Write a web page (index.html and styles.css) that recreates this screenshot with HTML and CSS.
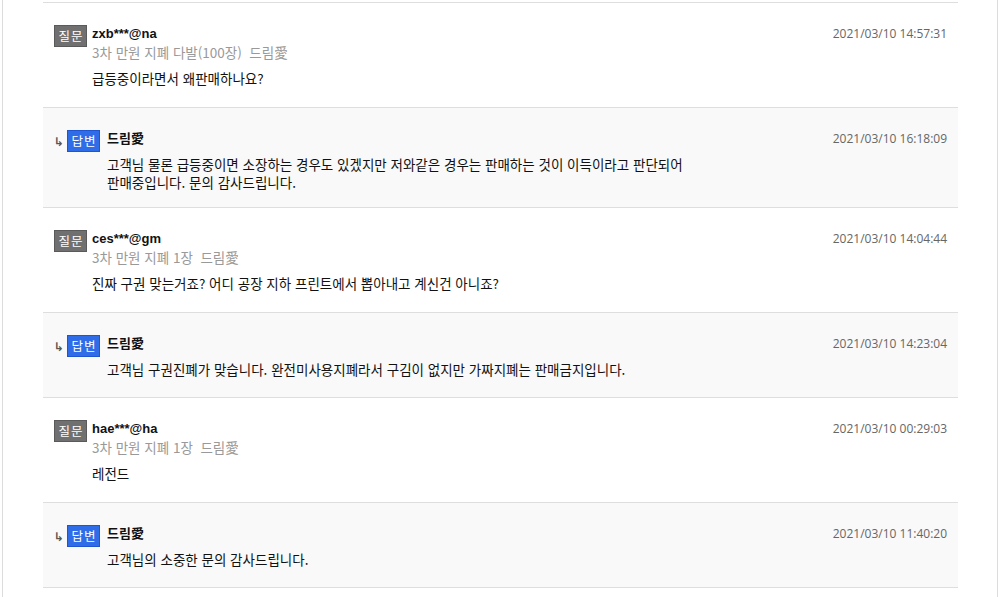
FILE: index.html
```html
<!DOCTYPE html>
<html lang="ko">
<head>
<meta charset="utf-8">
<title>상품 문의</title>
<link rel="stylesheet" href="styles.css">
</head>
<body>
<div class="frame">
  <ul class="qna">
    <li class="item q">
      <div class="head">
        <span class="badge q-badge">질문</span>
        <div class="body">
          <div class="name">zxb***@na</div>
          <div class="subject">3차 만원 지폐 다발(100장)&nbsp;&nbsp;드림愛</div>
          <div class="text">급등중이라면서 왜판매하나요?</div>
        </div>
        <span class="date">2021/03/10 14:57:31</span>
      </div>
    </li>
    <li class="item a">
      <div class="head">
        <span class="arrow">↳</span>
        <span class="badge a-badge">답변</span>
        <div class="body">
          <div class="name">드림愛</div>
          <div class="text">고객님 물론 급등중이면 소장하는 경우도 있겠지만 저와같은 경우는 판매하는 것이 이득이라고 판단되어<br>판매중입니다. 문의 감사드립니다.</div>
        </div>
        <span class="date">2021/03/10 16:18:09</span>
      </div>
    </li>
    <li class="item q">
      <div class="head">
        <span class="badge q-badge">질문</span>
        <div class="body">
          <div class="name">ces***@gm</div>
          <div class="subject">3차 만원 지폐 1장&nbsp;&nbsp;드림愛</div>
          <div class="text">진짜 구권 맞는거죠? 어디 공장 지하 프린트에서 뽑아내고 계신건 아니죠?</div>
        </div>
        <span class="date">2021/03/10 14:04:44</span>
      </div>
    </li>
    <li class="item a">
      <div class="head">
        <span class="arrow">↳</span>
        <span class="badge a-badge">답변</span>
        <div class="body">
          <div class="name">드림愛</div>
          <div class="text">고객님 구권진폐가 맞습니다. 완전미사용지폐라서 구김이 없지만 가짜지폐는 판매금지입니다.</div>
        </div>
        <span class="date">2021/03/10 14:23:04</span>
      </div>
    </li>
    <li class="item q">
      <div class="head">
        <span class="badge q-badge">질문</span>
        <div class="body">
          <div class="name">hae***@ha</div>
          <div class="subject">3차 만원 지폐 1장&nbsp;&nbsp;드림愛</div>
          <div class="text">레전드</div>
        </div>
        <span class="date">2021/03/10 00:29:03</span>
      </div>
    </li>
    <li class="item a">
      <div class="head">
        <span class="arrow">↳</span>
        <span class="badge a-badge">답변</span>
        <div class="body">
          <div class="name">드림愛</div>
          <div class="text">고객님의 소중한 문의 감사드립니다.</div>
        </div>
        <span class="date">2021/03/10 11:40:20</span>
      </div>
    </li>
  </ul>
</div>
</body>
</html>
```

FILE: styles.css
```css
html, body {
  margin: 0;
  padding: 0;
  background: #fff;
}

body {
  font-family: "Noto Sans CJK KR", sans-serif;
  font-size: 13.5px;
  color: #111;
}

.frame {
  margin: 0 2px;
  height: 597px;
  border-left: 1px solid #dcdcdc;
  border-right: 1px solid #dcdcdc;
  padding: 2px 39px 0 40px;
  box-sizing: border-box;
  overflow: hidden;
}

.qna {
  list-style: none;
  margin: 0;
  padding: 0;
  border-top: 1px solid #dedede;
}

.item {
  border-bottom: 1px solid #dedede;
  padding: 22px 11px 20px 11px;
}

.item.a {
  background: #f9f9f9;
  padding-bottom: 16px;
}

.head {
  display: flex;
  align-items: flex-start;
}

.arrow {
  width: 13px;
  line-height: 18px;
  margin-top: 3px;
  color: #555;
  font-size: 12px;
  font-family: "DejaVu Sans", sans-serif;
  font-weight: bold;
}

.badge {
  flex: none;
  height: 22px;
  line-height: 20px;
  box-sizing: border-box;
  font-size: 12.5px;
  letter-spacing: 1px;
  text-indent: 1px;
  color: #fff;
  text-align: center;
  width: 33px;
}

.q-badge {
  background: #707070;
  border: 1px solid #5a5a5a;
}

.a-badge {
  background: #2f6ce8;
  border: 1px solid #1f54d2;
}

.body {
  flex: 1;
  margin-left: 5px;
}

.a .body {
  margin-left: 7px;
}

.name {
  font-family: "Liberation Sans", "Noto Sans CJK KR", sans-serif;
  font-size: 13px;
  font-weight: bold;
  line-height: 18px;
  color: #111;
}

.subject {
  line-height: 18px;
  color: #999;
}

.text {
  line-height: 18px;
  margin-top: 8px;
  color: #111;
}

.a .text {
  margin-top: 7px;
  min-height: 21px;
}

.date {
  flex: none;
  font-family: "Open Sans", sans-serif;
  font-size: 12px;
  line-height: 18px;
  color: #666;
}
```
